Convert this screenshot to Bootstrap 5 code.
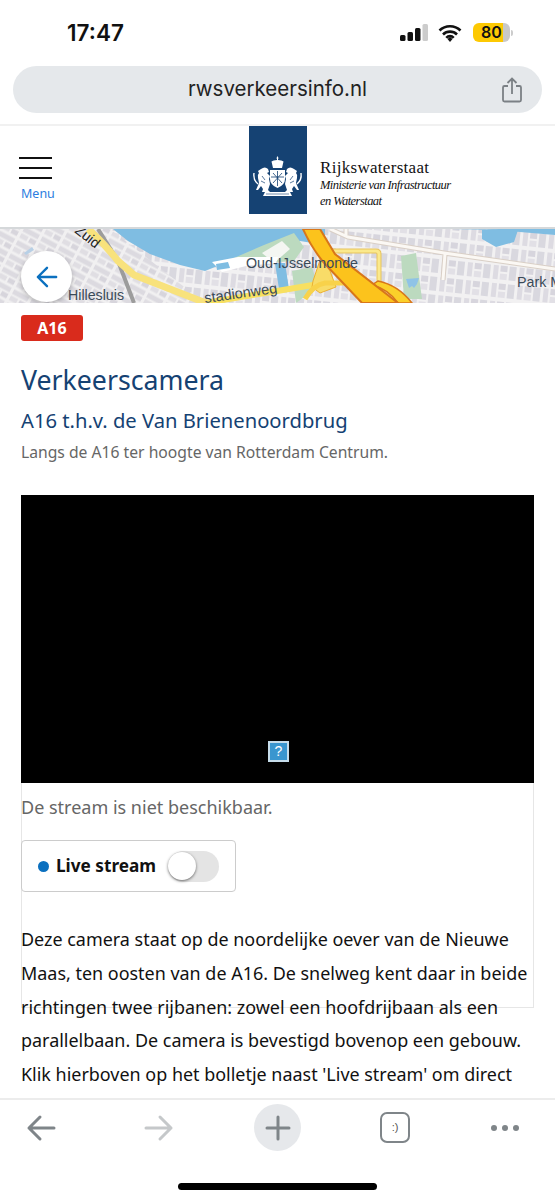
<!DOCTYPE html>
<html lang="nl">
<head>
<meta charset="UTF-8">
<meta name="viewport" content="width=device-width, initial-scale=1.0">
<title>Verkeerscamera</title>
<link href="https://cdn.jsdelivr.net/npm/bootstrap@5.3.0/dist/css/bootstrap.min.css" rel="stylesheet">
<style>
html, body { height: 1200px; overflow: hidden; background: #fff; }
body { font-family: "Noto Sans", "Open Sans", sans-serif; color: #111; }
.phone { width: 555px; height: 1200px; }
.status-row { height: 66px; padding: 15px 42px 0 67px; font-family: Inter, sans-serif; }
.clock { font-size: 22.5px; font-weight: 600; line-height: 36px; color: #111; }
.status-icons { padding-top: 8px; }
.wifi-ic { margin: 0 11px 0 10px; }
.batt { width: 37px; height: 19px; border-radius: 6px; font-size: 16px; font-weight: 600; line-height: 19px; text-align: center; background: linear-gradient(90deg, #fdc903 80%, #c9c9c9 80%); }
.batt-nub { width: 2px; height: 6px; margin-left: 1px; background: #ccc; border-radius: 0 2px 2px 0; }
.url-wrap { padding: 0 13px; height: 60px; border-bottom: 2px solid #f1f1f1; }
.url-pill { height: 47px; background: #e5e8eb; border-radius: 24px; position: relative; }
.url-text { font-family: Inter, sans-serif; font-size: 20.5px; color: #222; }
.url-share { position: absolute; right: 19px; top: 11px; }
.site-head { height: 103px; padding-left: 19px; border-bottom: 2px solid #d5d8da; position: relative; }
.burger { width: 33px; padding-top: 31px; }
.burger i { display: block; height: 2px; background: #111; margin-bottom: 8px; }
.menu-lbl { font-size: 12.5px; color: #2b7de0; line-height: 14px; margin: 1px 0 0 2px; }
.logo-wrap { position: absolute; left: 249px; top: 0; }
.logo-box { width: 58px; height: 88px; background: #154273; padding-top: 14px; }
.logo-txt { font-family: "Liberation Serif", serif; padding-left: 13px; padding-top: 32px; color: #111; }
.logo-a { font-size: 17px; line-height: 19px; letter-spacing: .3px; }
.logo-b { font-size: 12.5px; line-height: 16px; font-style: italic; letter-spacing: -.55px; }
.map-strip { height: 74px; position: relative; overflow: hidden; background: #e9e7ea; }
.map-strip svg { display: block; }
.back-btn { position: absolute; left: 21px; top: 22px; width: 51px; height: 51px; border-radius: 50%; background: #fff; box-shadow: 0 2px 5px rgba(0,0,0,.25); z-index: 2; }
.main-part { padding: 12px 21px 0; height: 795px; overflow: hidden; position: relative; }
.road-tag { background: #d92b1c; color: #fff; font-weight: 700; font-size: 16px; line-height: 26px; width: 62px; border-radius: 3px; text-align: center; }
.page-h { color: #154273; font-size: 26.7px; font-weight: 400; line-height: 36px; margin: 21px 0 0; }
.page-sub { color: #154273; font-size: 20.2px; font-weight: 400; line-height: 28px; margin: 8px 0 0; }
.page-loc { color: #666; font-size: 15.7px; line-height: 22px; margin: 7px 0 0; }
.cam-frame { height: 513px; margin-top: 32px; border: 1px solid #e6e6e6; border-top: 0; }
.cam-inner { margin-left: -1px; }
.cam-video { height: 288px; background: #000; position: relative; margin-right: -1px; }
.q-icon { position: absolute; left: 247px; top: 246px; width: 21px; height: 21px; background: #3a96cf; border: 2px solid #c6dcea; color: #fff; font-size: 14px; line-height: 17px; text-align: center; font-family: "Liberation Sans", sans-serif; }
.cam-note { color: #666; font-size: 18px; line-height: 24px; margin: 12px 0 0; }
.live-box { width: 215px; height: 52px; border: 1px solid #ccc; border-radius: 4px; margin-top: 21px; padding-left: 16px; }
.live-dot { width: 11px; height: 11px; background: #0b70bf; border-radius: 50%; }
.live-lbl { font-weight: 700; font-size: 17.2px; margin-left: 7px; color: #111; }
.live-sw { width: 51px; height: 31px; border-radius: 16px; background: #e4e4e4; margin-left: 12px; position: relative; }
.live-knob { position: absolute; left: 0; top: 1px; width: 28px; height: 28px; border-radius: 50%; background: #fff; box-shadow: 0 1px 3px rgba(0,0,0,.55); }
.cam-text { font-size: 17.95px; line-height: 33.75px; color: #111; margin: 31px 0 0; width: 514px; }
.tool-bar { height: 100px; border-top: 2px solid #ececec; background: #fff; position: relative; padding: 4px 26px 0; }
.tool-row { height: 47px; }
.tool-fwd { margin-left: 88px; }
.plus-bg { width: 47px; height: 47px; border-radius: 50%; background: #e6e8eb; margin-left: 80px; }
.tabs-ic { font-size: 11px; color: #555; width: 30px; height: 31px; border: 2.5px solid #7f8589; border-radius: 7px; line-height: 26px; text-align: center; font-family: "Liberation Sans", sans-serif; margin-left: 79px; }
.tool-more { margin-left: 80px; }
.home-bar { position: absolute; left: 178px; top: 83px; width: 199px; height: 7px; background: #000; border-radius: 4px; }
</style>
</head>
<body>
<div class="phone d-flex flex-column">

  <!-- ios status bar -->
  <div class="status-row d-flex justify-content-between align-items-start">
    <span class="clock">17:47</span>
    <div class="status-icons d-flex align-items-center">
      <svg width="28" height="19" viewBox="0 0 28 19"><rect x="0" y="12" width="5.500" height="6" rx="1.500" fill="#111"/><rect x="7.500" y="9" width="5.500" height="9" rx="1.500" fill="#111"/><rect x="15" y="5" width="5.500" height="13" rx="1.500" fill="#111"/><rect x="22.500" y="1" width="5.500" height="17" rx="1.500" fill="#ccc"/></svg>
      <svg class="wifi-ic" width="24" height="18" viewBox="0 0 24 18"><path d="M1.500 6.500a15 15 0 0 1 21 0M5 10.500a10 10 0 0 1 14 0M8.300 13.800a5 5 0 0 1 7.400 0" fill="none" stroke="#111" stroke-width="2.600"/><path d="M9.500 15l2.500-2 2.500 2-2.500 3z" fill="#111"/></svg>
      <div class="batt">80</div>
      <div class="batt-nub"></div>
    </div>
  </div>

  <!-- safari address bar -->
  <div class="url-wrap">
    <div class="url-pill d-flex justify-content-center align-items-center">
      <span class="url-text">rwsverkeersinfo.nl</span>
      <svg class="url-share" width="22" height="26" viewBox="0 0 22 26" fill="none" stroke="#7b8085" stroke-width="1.800"><path d="M7 9H3.500A1.500 1.500 0 0 0 2 10.500V23a1.500 1.500 0 0 0 1.500 1.500h15A1.500 1.500 0 0 0 20 23V10.500A1.500 1.500 0 0 0 18.500 9H15"/><path d="M11 17V2M6.500 6L11 1.500 15.500 6"/></svg>
    </div>
  </div>

  <!-- site header -->
  <div class="site-head">
    <div class="burger"><i></i><i></i><i></i></div>
    <div class="menu-lbl">Menu</div>
    <div class="logo-wrap d-flex">
      <div class="logo-box d-flex justify-content-center align-items-center">
        <svg width="50" height="42" viewBox="0 0 50 42" fill="#fff">
          <path d="M24.500 0l1.200 2.500H25V4q4 0 5.500 1.500L29 12H20l-1.500-6.500Q20 4 24 4V2.500h-.7z"/>
          <path d="M17 14h15v9q0 6-7.500 9Q17 29 17 23z"/>
          <path d="M24.500 15v15M18 21h13M20 17l9 10M29 17l-9 10" stroke="#154273" stroke-width=".8" fill="none"/>
          <g id="lion">
            <path d="M8 13q4-3 7 0l1 3-2 1 3 3-1 3 1 5-2 6 2 2H9l1-3-2-3-3 4H3l3-7-1-5q-1-3 1-5l-1-2z"/>
            <path d="M5 28Q0 24 1 17" stroke="#fff" stroke-width="1.400" fill="none"/>
            <path d="M9 20l3 4M8 25l4 2" stroke="#154273" stroke-width=".7" fill="none"/>
          </g>
          <use href="#lion" transform="matrix(-1 0 0 1 49 0)"/>
          <path d="M12 36h25l2 4H10z"/>
          <path d="M13 38h23" stroke="#154273" stroke-width=".6"/>
        </svg>
      </div>
      <div class="logo-txt">
        <div class="logo-a">Rijkswaterstaat</div>
        <div class="logo-b">Ministerie van Infrastructuur</div>
        <div class="logo-b">en Waterstaat</div>
      </div>
    </div>
  </div>

  <!-- map -->
  <div class="map-strip">
    <svg width="555" height="74" viewBox="0 0 555 74">
      <defs>
        <pattern id="blocksW" width="20" height="15" patternUnits="userSpaceOnUse" patternTransform="rotate(28)">
          <rect width="20" height="15" fill="#f1f0f1"/>
          <rect x="1" y="1.500" width="17" height="5" fill="#dcdae0"/>
          <rect x="1" y="8.500" width="8" height="5" fill="#e0dee3"/>
          <rect x="11" y="8.500" width="7" height="5" fill="#d7d5dc"/>
        </pattern>
        <pattern id="blocksE" width="26" height="18" patternUnits="userSpaceOnUse" patternTransform="rotate(6)">
          <rect width="26" height="18" fill="#f2f1f2"/>
          <rect x="1" y="2" width="5" height="14" fill="#dddbe2"/>
          <rect x="8" y="2" width="7" height="6" fill="#d7d5dd"/>
          <rect x="8" y="10" width="7" height="6" fill="#e2e0e6"/>
          <rect x="17" y="2" width="7" height="14" fill="#d9d8df"/>
        </pattern>
      </defs>
      <rect width="555" height="74" fill="url(#blocksE)"/>
      <rect width="112" height="74" fill="url(#blocksW)"/>
      <path d="M110 0L205 74H112z" fill="url(#blocksW)"/>
      <path d="M24 24l8-6 2 3-8 5z" fill="#b8d0e6"/>
      <!-- water -->
      <path d="M113 0H325V16L300 12 262 26 225 34 205 42 180 36 150 25 128 12z" fill="#7fbde2"/>
      <path d="M275 34h10l4 26h-10z" fill="#7fbde2"/>
      <path d="M452 0H555V6L520 3 500 1z" fill="#7fbde2"/>
      <path d="M482 1h36l-4 12-18 5-14-8z" fill="#7fbde2"/>
      <!-- green and marina -->
      <path d="M234 29l30-13 30-12 10 14-10 14-30 2z" fill="#bcdabf"/>
      <path d="M262 24l20-12 8 8-16 14z" fill="#f4f6f2"/>
      <path d="M212 33l26-5 40 0 -2 6-30 3-24 6z" fill="#fff"/>
      <path d="M216 35l12-2 2 6-13 2z" fill="#7fbde2"/>
      <path d="M292 42l20-4 6 20-22 16z" fill="#bcdabf"/>
      <path d="M401 27l15-3 6 46h-18z" fill="#bcdabf"/>
      <path d="M406 50l13-1-2 6-3 4-2-2-3 2z" fill="#8fc3e6"/>
      <!-- embanked road east -->
      <path d="M330 0l18 8 96 16 111 16M346 8v-8M445 25l-2 26" stroke="#d9cfc6" stroke-width="5" fill="none"/>
      <path d="M330 0l18 8 96 16 111 16M346 8v-8M445 25l-2 26" stroke="#fbf8f4" stroke-width="3" fill="none"/>
      <!-- rail and roads -->
      <path d="M98 0l20 32 16 42" stroke="#9c9c9c" stroke-width="4" fill="none"/>
      <path d="M88 0q14 12 30 32l16 14 72 28" stroke="#f8e27c" stroke-width="7" fill="none"/>
      <path d="M205 74l60-10 60-10" stroke="#f8e060" stroke-width="6" fill="none"/>
      <path d="M332 22h44q3 0 3 3v28" stroke="#e7c35d" stroke-width="5" fill="none"/>
      <path d="M332 22h44q3 0 3 3v28" stroke="#fbe98c" stroke-width="3" fill="none"/>
      <path d="M313 52l8-24 9 14 6 16-16 6-8-6z" fill="#f8dc68" stroke="#ecb030" stroke-width="1"/>
      <path d="M305 70q8-14 20-16h20l20 6" stroke="#f8d24a" stroke-width="5" fill="none"/>
      <path d="M378 52q20 4 34 22h-14q-10-14-26-18z" fill="#fbd02a" stroke="#d8761a" stroke-width="1.500"/>
      <path d="M303 0h17l15 25 63 49h-36l-37-39Q312 20 303 0z" fill="#fcc31c" stroke="#d8761a" stroke-width="2"/>
      <g font-family="'Liberation Sans', sans-serif" fill="#3a4a58">
        <text x="246" y="39" font-size="14.300">Oud-IJsselmonde</text>
        <text x="68" y="71" font-size="14.200">Hillesluis</text>
        <text x="205" y="74" font-size="14.500" transform="rotate(-8 205 74)">stadionweg</text>
        <text x="517" y="58" font-size="14.300">Park M</text>
        <text x="74" y="3" font-size="14" fill="#222" transform="rotate(38 74 3)">Zuid</text>
      </g>
    </svg>
    <div class="back-btn d-flex justify-content-center align-items-center">
      <svg width="22" height="22" viewBox="0 0 24 24" fill="none" stroke="#0b70bf" stroke-width="2.600" stroke-linecap="round" stroke-linejoin="round"><path d="M22 12H3M12 2L2 12l10 10"/></svg>
    </div>
  </div>

  <!-- content -->
  <div class="main-part">
    <div class="road-tag">A16</div>
    <h1 class="page-h">Verkeerscamera</h1>
    <h2 class="page-sub">A16 t.h.v. de Van Brienenoordbrug</h2>
    <p class="page-loc">Langs de A16 ter hoogte van Rotterdam Centrum.</p>
    <div class="cam-frame">
      <div class="cam-inner">
        <div class="cam-video"><div class="q-icon">?</div></div>
        <p class="cam-note">De stream is niet beschikbaar.</p>
        <div class="live-box d-flex align-items-center">
          <span class="live-dot"></span>
          <span class="live-lbl">Live stream</span>
          <div class="live-sw"><div class="live-knob"></div></div>
        </div>
        <p class="cam-text">Deze camera staat op de noordelijke oever van de Nieuwe Maas, ten oosten van de A16. De snelweg kent daar in beide richtingen twee rijbanen: zowel een hoofdrijbaan als een parallelbaan. De camera is bevestigd bovenop een gebouw. Klik hierboven op het bolletje naast 'Live stream' om direct</p>
      </div>
    </div>
  </div>

  <!-- safari toolbar -->
  <div class="tool-bar">
    <div class="tool-row d-flex align-items-center">
      <svg width="30" height="30" viewBox="0 0 30 30" fill="none" stroke="#7f8589" stroke-width="3" stroke-linecap="round" stroke-linejoin="round"><path d="M28 15H3M14 4L3 15l11 11"/></svg>
      <svg class="tool-fwd" width="30" height="30" viewBox="0 0 30 30" fill="none" stroke="#c5c8ca" stroke-width="3" stroke-linecap="round" stroke-linejoin="round"><path d="M2 15h25M16 4l11 11-11 11"/></svg>
      <div class="plus-bg d-flex justify-content-center align-items-center">
        <svg width="26" height="26" viewBox="0 0 26 26" stroke="#7f8589" stroke-width="3" stroke-linecap="round"><path d="M13 2v22M2 13h22"/></svg>
      </div>
      <div class="tabs-ic">:)</div>
      <svg class="tool-more" width="30" height="8" viewBox="0 0 30 8" fill="#7f8589"><circle cx="4" cy="4" r="3"/><circle cx="15" cy="4" r="3"/><circle cx="26" cy="4" r="3"/></svg>
    </div>
    <div class="home-bar"></div>
  </div>
</div>
<script src="https://cdn.jsdelivr.net/npm/bootstrap@5.3.0/dist/js/bootstrap.bundle.min.js"></script>
</body>
</html>
